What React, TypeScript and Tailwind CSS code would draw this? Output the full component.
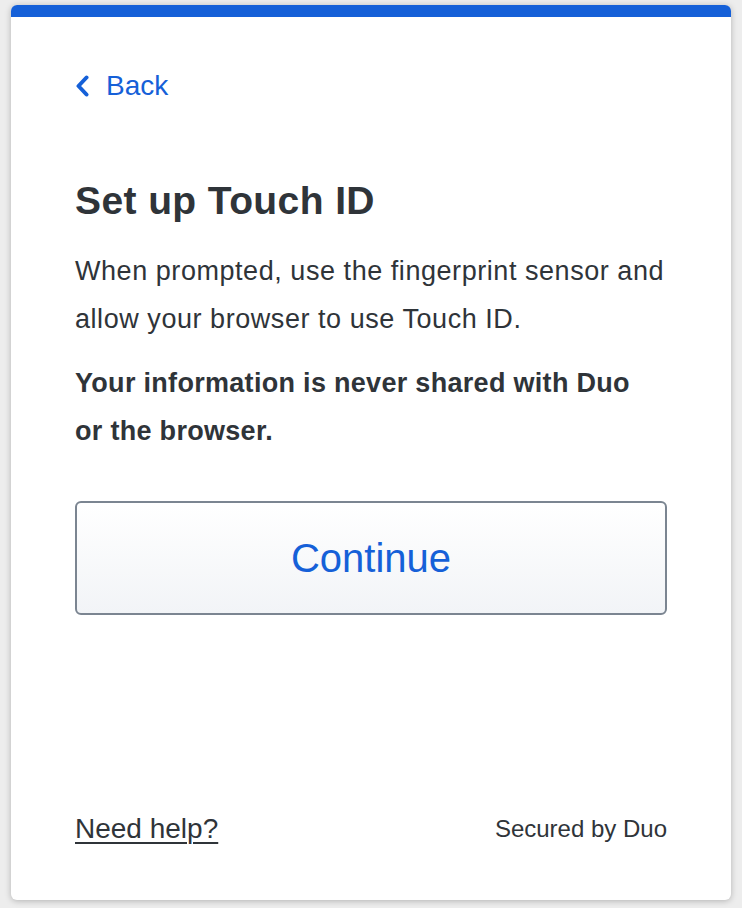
export default function App() {
  return (
    <div className="h-[908px] bg-[#ededed] px-[11px] pt-[5px] pb-[8px] font-['Liberation_Sans',Arial,sans-serif]">
      <div className="flex h-full flex-col overflow-hidden rounded-[6px] bg-white shadow-[0_1px_6px_rgba(0,0,0,0.25)]">
        <div className="h-[12px] bg-[#1560d8]" />
        <div className="flex flex-1 flex-col px-[64px]">
          <a href="#" className="mt-[54px] flex items-center gap-[17px] text-[28px] leading-[30px] text-[#1560d8]">
            <svg width="14" height="22" viewBox="0 0 14 22" fill="none">
              <path d="M11.5 2.5 L3.5 11 L11.5 19.5" stroke="currentColor" strokeWidth="4" strokeLinecap="round" strokeLinejoin="round" />
            </svg>
            Back
          </a>
          <h1 className="mt-[80px] text-[39px] font-bold leading-[40px] tracking-[0.4px] text-[#2f3439]">Set up Touch ID</h1>
          <p className="mt-[26px] text-[27px] leading-[48px] tracking-[0.55px] text-[#2f3439]">
            When prompted, use the fingerprint sensor and allow your browser to use Touch ID.
          </p>
          <p className="mt-[16px] max-w-[572px] text-[27px] font-bold leading-[48px] tracking-[0.3px] text-[#2f3439]">
            Your information is never shared with Duo or the browser.
          </p>
          <button className="mt-[46px] h-[114px] w-full rounded-[6px] border-2 border-[#7b8591] bg-gradient-to-b from-white to-[#f2f4f7] text-[40px] text-[#1560d8]">
            Continue
          </button>
          <div className="mt-auto mb-[56px] flex items-center justify-between">
            <a href="#" className="text-[28px] leading-[30px] text-[#2f3439] underline decoration-[1.5px] underline-offset-[4px]">
              Need help?
            </a>
            <span className="text-[24px] leading-[30px] text-[#2f3439]">Secured by Duo</span>
          </div>
        </div>
      </div>
    </div>
  );
}
